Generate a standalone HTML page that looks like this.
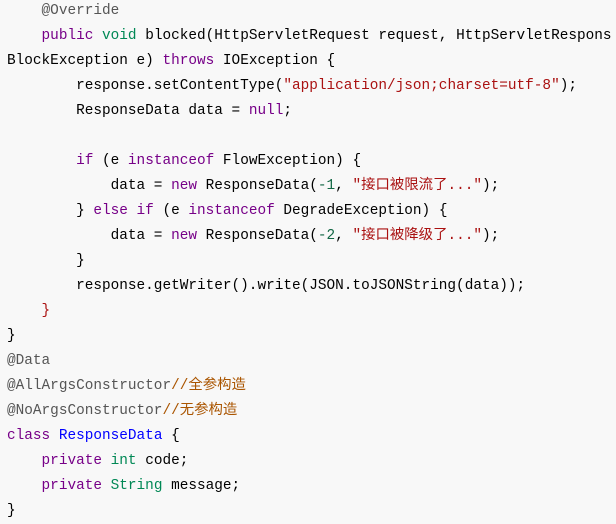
<!DOCTYPE html>
<html><head><meta charset="utf-8"><style>
html,body{margin:0;padding:0;background:#f8f8f8;width:616px;height:521px;overflow:hidden}
pre{margin:0;position:absolute;left:7px;top:-1px;width:609px;overflow:hidden;font-family:"Liberation Mono","Noto Sans CJK SC",monospace;font-size:14.4px;line-height:25px;color:#000;white-space:pre}
.m{color:#555}.k{color:#770088}.t{color:#008855}.s{color:#aa1111}.n{color:#116644}.d{color:#0000ff}.c{color:#aa5500}.r{color:#aa1111}
</style></head><body><pre>    <span class="m">@Override</span>
    <span class="k">public</span> <span class="t">void</span> blocked(HttpServletRequest request, HttpServletRespons
BlockException e) <span class="k">throws</span> IOException {
        response.setContentType(<span class="s">"application/json;charset=utf-8"</span>);
        ResponseData data = <span class="k">null</span>;

        <span class="k">if</span> (e <span class="k">instanceof</span> FlowException) {
            data = <span class="k">new</span> ResponseData(<span class="n">-1</span>, <span class="s">"接口被限流了..."</span>);
        } <span class="k">else</span> <span class="k">if</span> (e <span class="k">instanceof</span> DegradeException) {
            data = <span class="k">new</span> ResponseData(<span class="n">-2</span>, <span class="s">"接口被降级了..."</span>);
        }
        response.getWriter().write(JSON.toJSONString(data));
    <span class="r">}</span>
}
<span class="m">@Data</span>
<span class="m">@AllArgsConstructor</span><span class="c">//全参构造</span>
<span class="m">@NoArgsConstructor</span><span class="c">//无参构造</span>
<span class="k">class</span> <span class="d">ResponseData</span> {
    <span class="k">private</span> <span class="t">int</span> code;
    <span class="k">private</span> <span class="t">String</span> message;
}</pre></body></html>
